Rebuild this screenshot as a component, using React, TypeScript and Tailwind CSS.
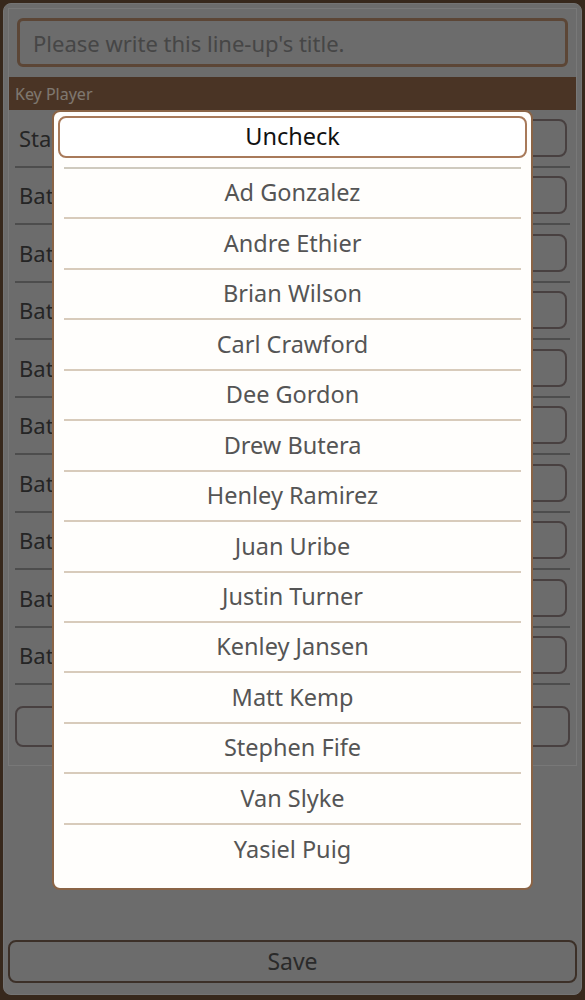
import React from "react";

const players = [
  "Ad Gonzalez",
  "Andre Ethier",
  "Brian Wilson",
  "Carl Crawford",
  "Dee Gordon",
  "Drew Butera",
  "Henley Ramirez",
  "Juan Uribe",
  "Justin Turner",
  "Kenley Jansen",
  "Matt Kemp",
  "Stephen Fife",
  "Van Slyke",
  "Yasiel Puig",
];

const rows = [
  "Starting Pitcher",
  "Batter 1",
  "Batter 2",
  "Batter 3",
  "Batter 4",
  "Batter 5",
  "Batter 6",
  "Batter 7",
  "Batter 8",
  "Batter 9",
];

export default function App() {
  return (
    <div
      className="relative h-[1000px] w-[585px] overflow-hidden bg-[#6e5038] p-[3px]"
      style={{ fontFamily: '"Noto Sans", "Noto Sans CJK KR", sans-serif' }}
    >
      {/* base page */}
      <div className="flex h-[992px] flex-col rounded-[8px] border border-[#e8e8e8] bg-[#d8d8d8] px-[4px] pt-[4px]">
        <div className="flex h-[758px] flex-col border border-[#f0f0f0] bg-[#d8d8d8]">
          <div className="px-[8px] pt-[9px] pb-[10px]">
            <div className="flex h-[49px] items-center rounded-[6px] border-[3px] border-[#b88c6c] bg-[#d8d8d8] px-[13px] text-[22px] leading-none text-[#8c8c8c]">
              Please write this line-up's title.
            </div>
          </div>
          <div className="flex h-[33px] items-center bg-[#94684a] px-[6px] text-[16px] leading-none text-[#fff0e0]">
            Key Player
          </div>
          <div className="flex flex-col px-[6px]">
            {rows.map((r) => (
              <div
                key={r}
                className="flex h-[57.5px] items-center justify-between border-b-2 border-[#9a9a9a] pl-[4px] pr-[3px]"
              >
                <span className="text-[22px] leading-none text-[#4a4a4a]">{r}</span>
                <div className="h-[38px] w-[300px] rounded-[8px] border-2 border-[#908080] bg-[#d8d8d8]" />
              </div>
            ))}
          </div>
          <div className="px-[6px] pt-[21px]">
            <div className="h-[41px] rounded-[8px] border-2 border-[#908080] bg-[#d8d8d8]" />
          </div>
        </div>
        <div className="flex flex-1 flex-col justify-end pb-[11px]">
          <div className="flex h-[43px] items-center justify-center rounded-[8px] border-2 border-[#786050] bg-[#d8d8d8] text-[23px] leading-none text-[#555]">
            Save
          </div>
        </div>
      </div>

      {/* dim overlay */}
      <div className="absolute inset-0 bg-black/50" />

      {/* modal */}
      <div className="absolute left-[52px] top-[110px] w-[481px] rounded-[8px] border-2 border-[#8a6446] bg-[#fffefc] px-[4px] pt-[4px] pb-[13px]">
        <div className="flex h-[42px] items-center justify-center rounded-[8px] border-2 border-[#a87a5a] bg-white text-[23.5px] leading-none text-[#111]">
          Uncheck
        </div>
        <div className="mx-[6px] mt-[9px] h-[2px] bg-[#cfcabe]" />
        <div className="flex flex-col px-[6px]">
          {players.map((p, i) => (
            <div
              key={p}
              className={
                "flex h-[50.45px] items-center justify-center text-[23.5px] leading-none text-[#555] " +
                (i < players.length - 1 ? "border-b-2 border-[#d8cbbb]" : "")
              }
            >
              {p}
            </div>
          ))}
        </div>
      </div>
    </div>
  );
}
